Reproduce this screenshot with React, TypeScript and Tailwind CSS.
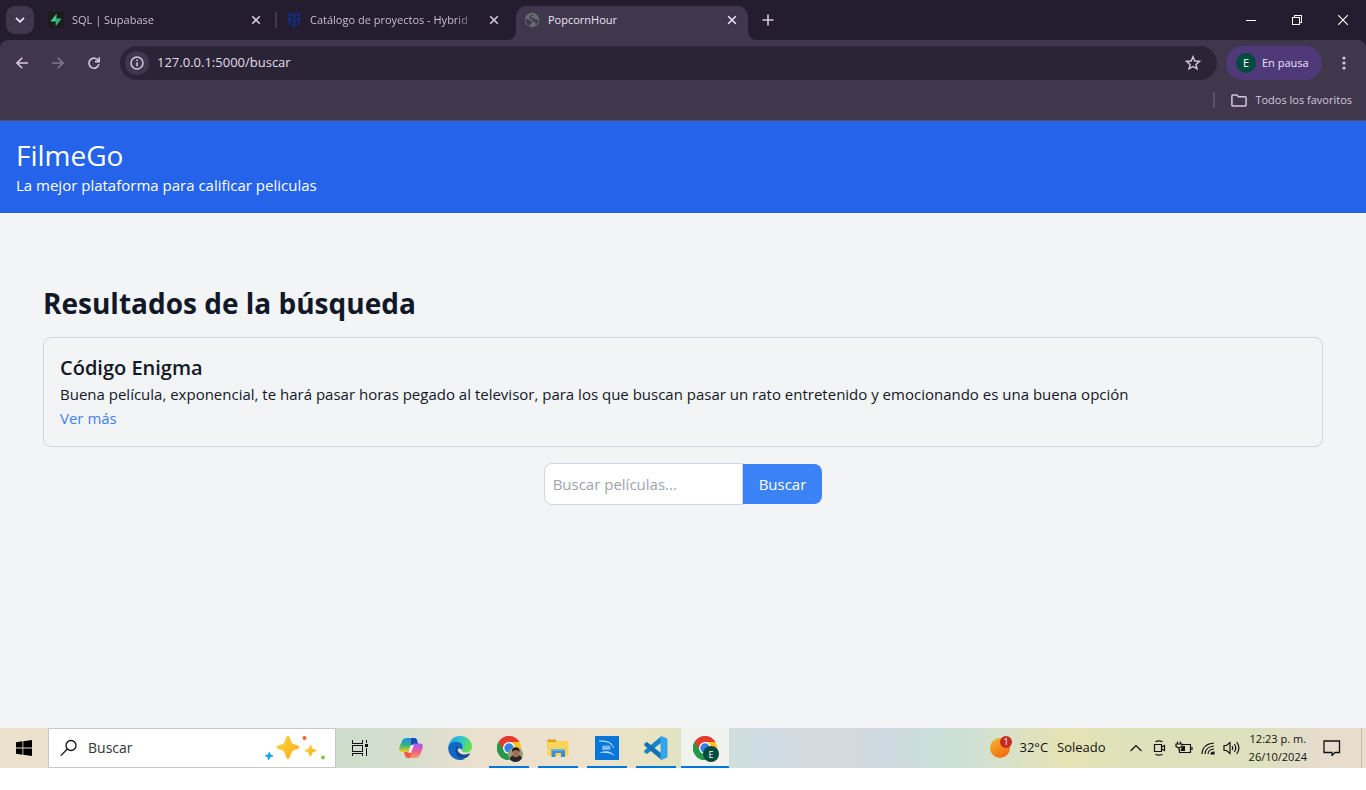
import type { ReactNode } from "react";

function CloseGlyph() {
  return (
    <svg viewBox="0 0 10 10" className="size-[10px]" fill="none" stroke="currentColor" strokeWidth="1.6">
      <path d="M1.2 1.2 8.8 8.8M8.8 1.2 1.2 8.8" />
    </svg>
  );
}

function SupabaseIcon() {
  return (
    <svg viewBox="0 0 16 16" className="size-4 shrink-0">
      <rect width="16" height="16" rx="1" fill="#1c1c1c" />
      <path d="M8.7 2.8c.1-.5-.4-.6-.7-.3L3 8.6c-.3.4-.1.9.4.9h4.5z" fill="#3ecf8e" />
      <path d="M7.6 13.2c0 .5.4.6.7.3L13 7.4c.3-.4.1-.9-.4-.9H7.9z" fill="#2fae75" />
    </svg>
  );
}

function ShieldIcon() {
  return (
    <svg viewBox="0 0 16 16" className="size-4 shrink-0" fill="#0f2f86">
      <path d="M2 1.5h3v3H2zM6.5 1.5h3v4.500h-3zM11 1.5h3v3h-3zM2 5.5h3V9.500H2zM11 5.5h3v4h-3zM6.500 7h3v3.500h-3zM2 10.500h3v3Q2.300 12.500 2 10.500zM14 10.500h-3v3q2.700-1 3-3zM6.500 11.500h3v2.800L8 15.500l-1.500-1.200z" />
    </svg>
  );
}

function GlobeIcon() {
  return (
    <svg viewBox="0 0 16 16" className="size-4 shrink-0">
      <circle cx="8" cy="8" r="7.200" fill="#686c70" />
      <path
        d="M1.600 6.800 5 7.800c1.100.2 1.200 1.500 2.400 1.500 1 0 1.200.8.600 1.600-.7.800-1.700.5-1.800 1.700l-.1 1.500C3.300 13.400 1.400 10.500 1.600 6.800zM8.700 2.200c.8.500.3 1.400-.6 1.600-1 .2-.9 1-.8 1.600.2.800 1.400.5 2.300.6 1 .1 1 1.400 2 1.700 1 .3 1.700-.1 2.500-.7.300 2.300-.7 4.500-2.300 5.700-.5-.8-.2-2-.9-2.600-.8-.7-2.200-.4-2.200-1.600 0-1-.9-1.300-1.900-1.500-1-.2-1.500-.9-1.300-1.800.2-1.200 1.200-2.800 3.200-3z"
        fill="#40374d"
      />
    </svg>
  );
}

type TabProps = { icon: ReactNode; title: string; divider?: boolean };

function InactiveTab({ icon, title, divider }: TabProps) {
  return (
    <div className="flex h-7 w-[238px] min-w-0 shrink items-center pl-2">
      {icon}
      <span className="ml-2 w-[166px] shrink whitespace-nowrap bg-[linear-gradient(90deg,#d3c9dd_88%,transparent)] bg-clip-text text-transparent">
        {title}
      </span>
      <button aria-label="Cerrar pestaña" className="ml-[13px] text-[#d3c9dd]">
        <CloseGlyph />
      </button>
      {divider && <span className="ml-[14px] h-4 w-[2px] shrink-0 bg-[#40374d]" />}
    </div>
  );
}

function TabStrip() {
  return (
    <div className="flex h-10 items-center bg-[#241d2f] text-[11px] text-[#d3c9dd]">
      <button aria-label="Buscar pestañas" className="mx-[6px] grid size-7 shrink-0 place-items-center rounded-[9px] bg-[#40374d] text-[#ece4f5]">
        <svg viewBox="0 0 10 6" className="h-[6px] w-[10px]" fill="none" stroke="currentColor" strokeWidth="1.800">
          <path d="M1 .8 5 4.800 9 .8" />
        </svg>
      </button>
      <InactiveTab icon={<SupabaseIcon />} title="SQL | Supabase" divider />
      <InactiveTab icon={<ShieldIcon />} title="Catálogo de proyectos - Hybrid" />
      <div className="relative flex h-[34px] w-[232px] shrink items-center self-end rounded-t-[10px] bg-[#40374d] pb-[6px] pl-2 text-[#ece4f5]">
        <span className="absolute bottom-0 -left-[10px] size-[10px] bg-[radial-gradient(circle_at_0_0,transparent_10px,#40374d_11px)]" />
        <span className="absolute -right-[10px] bottom-0 size-[10px] bg-[radial-gradient(circle_at_100%_0,transparent_10px,#40374d_11px)]" />
        <GlobeIcon />
        <span className="ml-2 w-[166px] truncate">PopcornHour</span>
        <button aria-label="Cerrar pestaña" className="ml-[13px]">
          <CloseGlyph />
        </button>
      </div>
      <button aria-label="Nueva pestaña" className="ml-[14px]">
        <svg viewBox="0 0 12 12" className="size-3" fill="none" stroke="currentColor" strokeWidth="1.600">
          <path d="M6 .5v11M.5 6h11" />
        </svg>
      </button>
      <div className="ml-auto flex text-white">
        <button aria-label="Minimizar" className="grid w-[46px] place-items-center">
          <svg viewBox="0 0 10 10" className="size-[10px]" stroke="currentColor" shapeRendering="crispEdges">
            <path d="M0 5.500h10" />
          </svg>
        </button>
        <button aria-label="Restaurar" className="grid w-[46px] place-items-center">
          <svg viewBox="0 0 10 10" className="size-[10px]" fill="none" stroke="currentColor" shapeRendering="crispEdges">
            <path d="M.5 2.500h7v7h-7zM2.500 2.500v-2h7v7h-2" />
          </svg>
        </button>
        <button aria-label="Cerrar" className="grid w-[46px] place-items-center">
          <svg viewBox="0 0 10 10" className="size-[10px]" fill="none" stroke="currentColor" strokeWidth="1.100">
            <path d="M0 0 10 10M10 0 0 10" />
          </svg>
        </button>
      </div>
    </div>
  );
}

function Toolbar() {
  return (
    <div className="bg-[#241d2f]">
      <div className="rounded-t-lg border-b border-[#575060] bg-[#40374d] text-[#d3c9dd]">
        <div className="flex h-[46px] items-center">
          <div className="flex w-[120px] shrink-0">
            <button aria-label="Atrás" className="ml-1 grid w-9 place-items-center">
              <svg viewBox="0 0 12 12" className="size-3" fill="none" stroke="currentColor" strokeWidth="1.600">
                <path d="M12 6H1.200M6.300.7 1 6l5.300 5.300" />
              </svg>
            </button>
            <button aria-label="Adelante" className="grid w-9 place-items-center text-[#81788c]">
              <svg viewBox="0 0 12 12" className="size-3" fill="none" stroke="currentColor" strokeWidth="1.600">
                <path d="M0 6h10.800M5.700.7 11 6l-5.300 5.300" />
              </svg>
            </button>
            <button aria-label="Recargar" className="grid w-9 place-items-center">
              <svg viewBox="0 0 12 12" className="size-3" fill="none" stroke="currentColor" strokeWidth="1.600">
                <path d="M10.400 3.800A5 5 0 1 0 10.900 7.200M11.200.3v4.300H6.900" />
              </svg>
            </button>
          </div>
          <div className="flex h-[34px] min-w-0 flex-1 items-center rounded-full bg-[#2b2436] pr-4 pl-[5px]">
            <button aria-label="Información del sitio" className="grid size-6 shrink-0 place-items-center rounded-full bg-[#40374d]">
              <svg viewBox="0 0 14 14" className="size-[14px]" fill="none" stroke="currentColor" strokeWidth="1.500">
                <circle cx="7" cy="7" r="6" />
                <path d="M7 6.200v4M7 3.600v1.500" />
              </svg>
            </button>
            <input
              aria-label="Dirección"
              defaultValue="127.0.0.1:5000/buscar"
              className="ml-2 min-w-0 flex-1 bg-transparent text-[13px] text-[#e4dcec] outline-none"
            />
            <button aria-label="Agregar a favoritos">
              <svg viewBox="0 0 16 16" className="size-4" fill="none" stroke="currentColor" strokeWidth="1.400">
                <path d="m8 1.700 1.800 4.300 4.600.4-3.500 3 1.100 4.500L8 11.500l-4 2.400 1.100-4.500-3.500-3L6.200 6z" />
              </svg>
            </button>
          </div>
          <button className="ml-[9px] flex h-[34px] w-24 shrink-0 items-center rounded-full bg-[#4f3979] pl-[10px] text-[11px] text-[#eee2ff]">
            <span className="mr-[6px] grid size-5 place-items-center rounded-full bg-[#004d40] text-white">E</span>
            En pausa
          </button>
          <button aria-label="Menú" className="grid w-11 shrink-0 place-items-center">
            <svg viewBox="0 0 4 14" className="h-[14px] w-1" fill="currentColor">
              <circle cx="2" cy="2" r="1.600" />
              <circle cx="2" cy="7" r="1.600" />
              <circle cx="2" cy="12" r="1.600" />
            </svg>
          </button>
        </div>
        <div className="flex h-[34px] items-center justify-end pr-[14px] pb-[6px] text-[11px]">
          <span className="h-4 w-[2px] bg-[#5b5268]" />
          <button className="ml-4 flex items-center gap-2">
            <svg viewBox="0 0 16 13" className="h-[13px] w-4" fill="none" stroke="currentColor" strokeWidth="1.500">
              <path d="M.9 11.100V1.900Q.9 1 1.800 1h4l1.700 1.800h6.600q1 0 1 .9v7.400q0 .9-1 .9H1.800q-.9 0-.9-.9z" />
            </svg>
            Todos los favoritos
          </button>
        </div>
      </div>
    </div>
  );
}

function ChromeIcon({ children }: { children?: ReactNode }) {
  return (
    <svg viewBox="0 0 26 26" className="mt-[2px] ml-[2px] size-[26px]">
      <path d="M12 12 1.600 6A12 12 0 0 1 22.400 6z" fill="#e33b2e" />
      <path d="M12 12 1.600 6A12 12 0 0 0 12 24l5-9z" fill="#249a49" />
      <path d="M22.400 6A12 12 0 0 1 12 24l5.200-9L12 6z" fill="#fcc31e" />
      <path d="M1.600 6Q6 0 12 0t10.400 6H12L7 15z" fill="#e33b2e" />
      <path d="M1.600 6 7 15l5 2.500L12 24A12 12 0 0 1 1.600 6z" fill="#249a49" />
      <circle cx="12" cy="12" r="6" fill="#fff" />
      <circle cx="12" cy="12" r="4.700" fill="#3480eb" />
      {children}
    </svg>
  );
}

function CopilotIcon() {
  return (
    <svg viewBox="0 0 24 24" className="size-6">
      <defs>
        <linearGradient id="cpBlue" x1="0" y1="0" x2="0" y2="1">
          <stop offset="0" stopColor="#1b91e8" />
          <stop offset=".5" stopColor="#34af83" />
          <stop offset="1" stopColor="#f4cf19" />
        </linearGradient>
        <linearGradient id="cpPink" x1="0" y1="0" x2="0" y2="1">
          <stop offset="0" stopColor="#a45af0" />
          <stop offset=".55" stopColor="#ed5f91" />
          <stop offset="1" stopColor="#ff9f55" />
        </linearGradient>
      </defs>
      <path d="M8 2h7c1.500 0 2.500.7 3 2.400L19 8h-4L9 16H3c-3 0-3.200-2.400-2.500-5L3 5c.8-2 2-3 5-3z" fill="url(#cpBlue)" />
      <path d="M12 2h3c1.500 0 2.500.7 3 2.400L19 8h-4c-2 0-2.500 1-3 2z" fill="#1748b8" />
      <path d="M16 22H9c-1.500 0-2.500-.7-3-2.400L5 16h3.500l4-6.500C13.300 8 14 7.500 16 7.500h5c3 0 3.200 2.400 2.500 5L21 19c-.8 2-2 3-5 3z" fill="url(#cpPink)" />
      <path d="M5 16h3.500c1 0 1.500-.4 2-1.200L13 10l-1 10-1 2H9c-1.500 0-2.500-.7-3-2.400z" fill="#f15b43" />
      <path d="m11.500 9.500 3.500-.7-3 8.200-3-.5z" fill="#f5eee8" />
    </svg>
  );
}

function EdgeIcon() {
  return (
    <svg viewBox="0 0 24 24" className="size-6">
      <defs>
        <linearGradient id="edTop" x1="0" y1="0" x2="1" y2=".4">
          <stop offset="0" stopColor="#2197df" />
          <stop offset=".5" stopColor="#2bc3d2" />
          <stop offset="1" stopColor="#66df55" />
        </linearGradient>
      </defs>
      <path d="M.3 11C1 4.500 6 0 12 0c7 0 12 5 12 10.500 0 4-3 6-6 6-2.500 0-4-1-4-2 0-.7.800-1 .8-2.500 0-2-2-4-5-4C6 8 2 9.500.3 11z" fill="url(#edTop)" />
      <path d="M.2 12C.5 8.500 4 5.800 8.500 5.800c4 0 6.500 3 6.300 6-.1 1-.8 1.500-.8 2.300C12 11 9 12.500 9 15.500c0 4 4 7 8 7.500-8 3.500-17-2.500-16.800-11z" fill="#1268c4" />
      <path d="M9.800 9.500C6 12 6.500 19 12 22c3 1.500 7.500.5 10-4 .4-.6 0-.8-.6-.5-5 2.500-12 .5-12-4.500 0-1.400.6-2.500.4-3.500z" fill="#114a91" />
    </svg>
  );
}

function ExplorerIcon() {
  return (
    <svg viewBox="0 0 24 24" className="size-6">
      <path d="M1.500 3.500h8l1.500 2h11V12h-20.500z" fill="#dfa012" />
      <path d="M1.500 6h8l1-1h12v15h-21z" fill="#ffd35b" />
      <path d="M5.500 21v-8h13.500v8h-4v-4h-5.500v4z" fill="#3a8fd8" />
      <path d="M5.500 13h13.500v2H5.500z" fill="#65b0e5" />
    </svg>
  );
}

function KaliIcon() {
  return (
    <svg viewBox="0 0 24 24" className="size-6">
      <rect width="24" height="24" fill="#0877d9" />
      <path d="M4 4.500c6-.5 11 .5 14 4.500-4-2.500-8-3.500-14-3.500zM4 17c6-3 12-2.500 16 3-4-3-9-4-16-3z" fill="#bfe0fa" />
      <path d="M7 9.500h8.500v4.500H7z" fill="#5aa4e4" />
      <path d="M8 11h6.500M8 12.700h6.500" stroke="#b8daf6" strokeDasharray="2 .6" />
      <path d="m15 7 4 5" stroke="#bfe0fa" />
    </svg>
  );
}

function CodeIcon() {
  return (
    <svg viewBox="0 0 24 24" className="size-6">
      <path d="M17.500 0v6.500L3 18 .3 16.500v-2z" fill="#1686ca" />
      <path d="M17.500 24v-6.500L3 6 .3 7.500v2z" fill="#1073b5" />
      <path d="m17.500 0 6 2.800v18.400l-6 2.800c-.8-.2-1-.7-1-1.500v-21z" fill="#32a5ee" />
    </svg>
  );
}

function Sparkles() {
  return (
    <svg viewBox="0 0 64 26" className="ml-auto h-[26px] w-16 shrink-0">
      <defs>
        <linearGradient id="gold" x1="0" y1="0" x2="1" y2="1">
          <stop offset="0" stopColor="#ffd84a" />
          <stop offset="1" stopColor="#f7ab12" />
        </linearGradient>
      </defs>
      <path d="M25 .5c2 0 3 6.500 4.300 7.700S36.500 10.500 36.500 12.300 30.500 15 29.300 16.200 27 24 25 24s-3-6.600-4.300-7.800-7.200-2.100-7.200-3.900 6-2.900 7.200-4.100S23 .5 25 .5z" fill="url(#gold)" />
      <path d="M47.500 10c1.200 0 1.300 3 2.100 3.700s3.900.7 3.900 1.800-3 1.100-3.800 1.900S48.700 21 47.500 21s-1.400-2.900-2.200-3.600-3.800-.8-3.800-1.900 3-1.100 3.900-1.800S46.300 10 47.500 10z" fill="url(#gold)" />
      <path d="M6.500 17c1.100.2.600 2 1.300 2.700s2.700.2 2.500 1.400-2.100.6-2.900 1.200-.6 2.900-1.800 2.700-.6-2.200-1.300-2.900-2.500-.1-2.300-1.300 2.100-.7 2.800-1.200.6-2.800 1.700-2.600z" fill="#13a5e8" />
      <circle cx="41.500" cy="3" r="2" fill="#f0612f" />
      <circle cx="60" cy="22.500" r="2" fill="#88c540" />
    </svg>
  );
}

type TaskProps = { label: string; open?: boolean; active?: boolean; children: ReactNode };

function TaskButton({ label, open, active, children }: TaskProps) {
  return (
    <button aria-label={label} className={active ? "relative grid h-10 w-12 shrink-0 place-items-center bg-[#f0f3ed]" : "relative grid h-10 w-12 shrink-0 place-items-center"}>
      {children}
      {(open || active) && (
        <span className={active ? "absolute inset-x-0 bottom-0 h-[2px] bg-[#0078d7]" : "absolute inset-x-1 bottom-0 h-[2px] bg-[#0078d7]"} />
      )}
    </button>
  );
}

function TrayIcons() {
  return (
    <div className="flex items-center gap-2 text-[#111]">
      <svg viewBox="0 0 12 16" className="mr-[3px] h-4 w-3" fill="none" stroke="currentColor" strokeWidth="1.200">
        <path d="M.5 11 6 5.500l5.500 5.500" />
      </svg>
      <svg viewBox="0 0 14 16" className="h-4 w-[14px]" fill="none" stroke="currentColor" strokeWidth="1.200">
        <path d="M1.500 4.500h7v7h-7zM8.500 7l3-1.500v5l-3-1.500M2.500 1.800q3.500-2 7 0M2.500 14.200q3.500 2 7 0" />
      </svg>
      <svg viewBox="0 0 18 16" className="h-4 w-[18px]" fill="none" stroke="currentColor" strokeWidth="1.200">
        <path d="M7 4.500h8.500v8H4.500V9M17 7v3M2.500 1.500V4M5.500 1.500V4M1 4h6v2.500Q4 9 1 6.500zM4 8v2.500" />
        <path d="M8 6h2v5H6V9z" fill="currentColor" stroke="none" />
      </svg>
      <svg viewBox="0 0 14 16" className="h-4 w-[14px]" fill="none" stroke="currentColor" strokeWidth="1.100">
        <path d="M1 14Q1.500 4 13 3M4 14q.3-7 9-8M7 14q.2-4.500 6-5" />
        <path d="M10 14q0-2 3-2v2z" fill="currentColor" />
      </svg>
      <svg viewBox="0 0 18 16" className="h-4 w-[18px]" fill="none" stroke="currentColor" strokeWidth="1.200">
        <path d="M1 5.500h2.500L7 2.500v11l-3.500-3H1zM9 6q1.500 2 0 4M11.300 4q3 4 0 8M13.600 2q4.600 6 0 12" />
      </svg>
    </div>
  );
}

function Taskbar() {
  return (
    <footer className="flex h-10 items-center bg-[linear-gradient(90deg,#ece1cc_0%,#ece1cc_4%,#cddccb_24%,#d3decf_29%,#eae0cd_35%,#ede2cc_44%,#e4e4bf_49%,#d0dfdc_53%,#cddbe3_56%,#d5d9dc_60%,#cdd9e1_65%,#cadfd8_69%,#cfe1d4_71%,#e6e2b4_78%,#dde2bb_83%,#dde1bd_92%,#e5dccb_96%,#e9ddcc_100%)] text-[#111]">
      <TaskButton label="Inicio">
        <svg viewBox="0 0 16 16" className="size-4" fill="#000">
          <path d="M0 2.200 6.500 1.300v6.300H0zM7.300 1.200 16 0v7.600H7.300zM0 8.400h6.500v6.300L0 13.800zM7.300 8.400H16V16l-8.700-1.200z" />
        </svg>
      </TaskButton>
      <label className="flex h-10 w-[288px] min-w-0 shrink items-center border border-[#c6c6c6] bg-white pr-2 pl-[11px]">
        <svg viewBox="0 0 18 18" className="size-[18px] shrink-0" fill="none" stroke="#111" strokeWidth="1.300">
          <circle cx="11" cy="6.500" r="5" />
          <path d="M7.400 10 .8 16.600" />
        </svg>
        <input aria-label="Buscar en Windows" placeholder="Buscar" className="ml-[10px] w-[170px] min-w-0 shrink text-sm outline-none placeholder:text-[#333]" />
        <Sparkles />
      </label>
      <TaskButton label="Vista de tareas">
        <svg viewBox="0 0 18 18" className="size-[18px]" fill="none" stroke="#111" shapeRendering="crispEdges">
          <path d="M1.500 1v3.500h10V1M1.500 6.500h10v6h-10zM1.500 17v-2.500h10V17M15.500 1v3M15.500 9v8" />
          <path d="M14 5h3v3h-3z" fill="#111" stroke="none" />
        </svg>
      </TaskButton>
      <div className="ml-[3px] flex shrink-0 gap-px">
        <TaskButton label="Copilot"><CopilotIcon /></TaskButton>
        <TaskButton label="Edge"><EdgeIcon /></TaskButton>
        <TaskButton label="Chrome, perfil personal" open>
          <ChromeIcon>
            <circle cx="18.500" cy="18.500" r="7.500" fill="#9b9a78" />
            <path d="M12.500 23q1-3 4-4h4.500q3 .5 4 3a7.500 7.500 0 0 1-12.500 1z" fill="#26242c" />
            <ellipse cx="18.800" cy="17" rx="3.300" ry="4.200" fill="#a56f51" />
            <path d="M15 16q-.5-4.500 3.800-4.500T22.500 16q-1-2-3.800-2T15 16z" fill="#1d1717" />
          </ChromeIcon>
        </TaskButton>
        <TaskButton label="Explorador de archivos" open><ExplorerIcon /></TaskButton>
        <TaskButton label="Kali Linux" open><KaliIcon /></TaskButton>
        <TaskButton label="Visual Studio Code" open><CodeIcon /></TaskButton>
        <TaskButton label="Chrome, perfil E" active>
          <ChromeIcon>
            <circle cx="18" cy="18" r="8" fill="#004d40" />
            <text x="18" y="21.500" textAnchor="middle" fontSize="9" fill="#fff">E</text>
          </ChromeIcon>
        </TaskButton>
      </div>
      <button className="ml-auto flex shrink-0 items-center text-[13px]">
        <svg viewBox="0 0 24 24" className="size-6">
          <defs>
            <linearGradient id="sun" x1="0" y1="0" x2=".6" y2="1">
              <stop offset="0" stopColor="#f3b82d" />
              <stop offset="1" stopColor="#f56c12" />
            </linearGradient>
          </defs>
          <circle cx="11" cy="12" r="10" fill="url(#sun)" />
          <circle cx="17" cy="6" r="6" fill="#c92a20" />
          <text x="17" y="9" textAnchor="middle" fontSize="9" fill="#fff">1</text>
        </svg>
        <span className="ml-[6px]">32°C</span>
        <span className="ml-[9px]">Soleado</span>
      </button>
      <div className="ml-6 shrink-0">
        <TrayIcons />
      </div>
      <time className="ml-2 shrink-0 text-center text-[11px] leading-[18px]">
        12:23 p. m.
        <br />
        26/10/2024
      </time>
      <button aria-label="Notificaciones" className="mr-5 ml-4 shrink-0">
        <svg viewBox="0 0 18 16" className="h-4 w-[18px]" fill="none" stroke="#111" strokeWidth="1.300">
          <path d="M1 1h15.500v11.500H12l-3 3v-3H1z" />
        </svg>
      </button>
      <span className="mr-1 h-10 w-px shrink-0 bg-[#c0b9a6]" />
    </footer>
  );
}

export default function App() {
  return (
    <div className="flex min-h-screen flex-col bg-white pb-[22px] font-['Open_Sans','Noto_Sans',sans-serif]">
      <TabStrip />
      <Toolbar />
      <div className="flex flex-1 flex-col bg-gray-100 text-[15px] leading-6 text-[#111827]">
        <header className="bg-[#2563eb] p-4 text-white">
          <h1 className="text-[28px] leading-9">FilmeGo</h1>
          <p>La mejor plataforma para calificar peliculas</p>
        </header>
        <main className="mx-auto w-full max-w-[1280px] flex-1 pt-[72px]">
          <h2 className="mb-4 text-[28px] leading-9 font-bold">Resultados de la búsqueda</h2>
          <article className="mb-4 rounded-lg border border-[#d1d5db] p-4">
            <h3 className="text-xl leading-7 font-semibold">Código Enigma</h3>
            <p>Buena película, exponencial, te hará pasar horas pegado al televisor, para los que buscan pasar un rato entretenido y emocionando es una buena opción</p>
            <a href="#detalle" className="block w-fit text-[#3b82f6]">Ver más</a>
          </article>
          <form className="flex items-center justify-center" onSubmit={(e) => e.preventDefault()}>
            <input
              type="text"
              aria-label="Buscar películas"
              placeholder="Buscar películas..."
              className="w-[199px] rounded-l-lg border border-[#d1d5db] bg-white p-2 outline-none placeholder:text-[#9ca3af]"
            />
            <button type="submit" className="rounded-r-lg bg-[#3b82f6] px-4 py-2 text-white">Buscar</button>
          </form>
        </main>
      </div>
      <Taskbar />
    </div>
  );
}
